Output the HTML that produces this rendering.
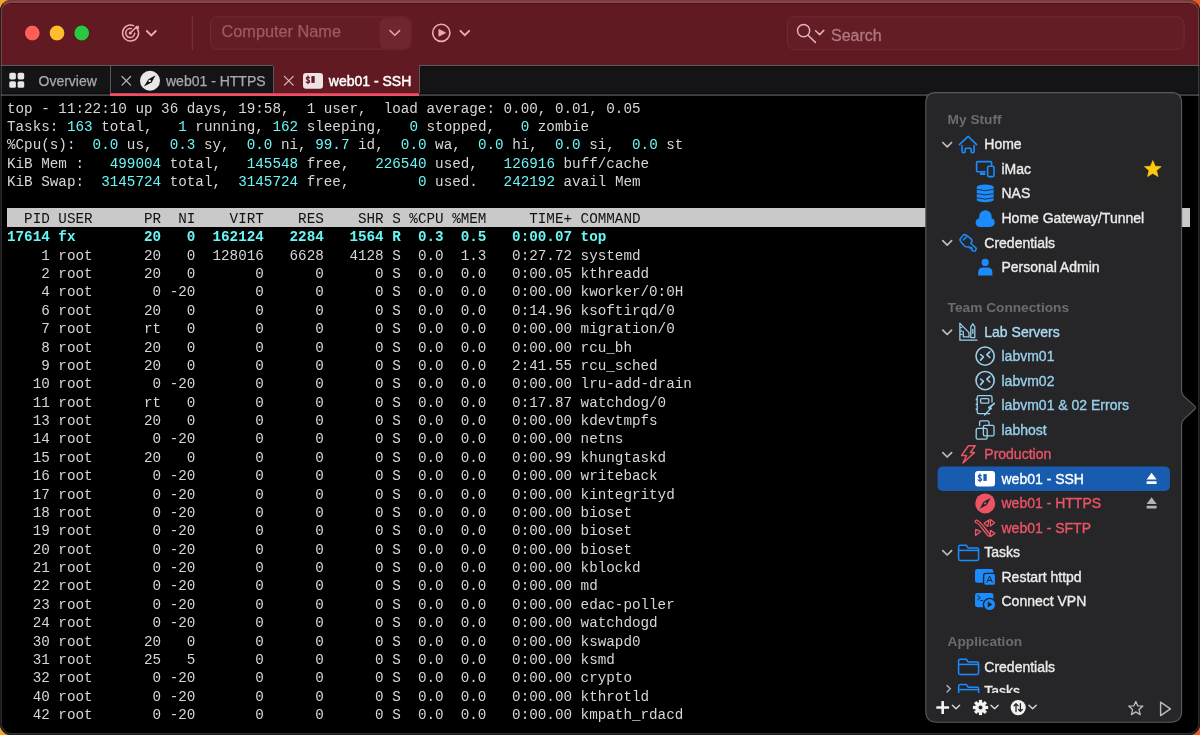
<!DOCTYPE html>
<html><head><meta charset="utf-8"><style>
*{margin:0;padding:0;box-sizing:border-box}
html,body{width:1200px;height:735px;overflow:hidden}
body{position:relative;background:linear-gradient(90deg,#f2a52c 0%,#f08a2a 50%,#ee5a26 100%);font-family:"Liberation Sans",sans-serif}
#win{position:absolute;left:0;top:0;width:1200px;height:735px;clip-path:inset(0 round 11px);background:#000}
#winb{position:absolute;left:0;top:0;width:1200px;height:735px;border-radius:11px;border:1px solid rgba(30,30,30,0.9);border-top-color:#7a3c28;pointer-events:none}
#winb2{position:absolute;left:1px;top:1px;width:1198px;height:733px;border-radius:10px;border:1px solid rgba(255,255,255,0.17);border-top:2px solid rgba(255,255,255,0.2);border-bottom-color:rgba(255,255,255,0.2);pointer-events:none}
.a{position:absolute}
.gs{will-change:transform}
#tb{left:0;top:0;width:1200px;height:65px;background:#621a22}
#term{position:absolute;left:7.0px;top:99.71px;font-family:"Liberation Mono",monospace;font-size:14.28px;line-height:18.38px;color:#d6d6d6;white-space:pre}
#term .ln{height:18.38px}
#term .c{color:#6af6f6}
#term .tb{color:#6af6f6;font-weight:bold}
#term .hd{color:#111}
</style></head>
<body>
<div id="win" class="gs">
  <div class="a" id="tb"></div><div class="a" style="left:10px;top:3px;width:1180px;height:1px;background:#570f19"></div>
  
<svg class="a" style="left:0;top:0" width="1200" height="66" viewBox="0 0 1200 66">
  <circle cx="32.3" cy="33" r="7.9" fill="#4a1218"/>
  <circle cx="32.3" cy="33" r="7.4" fill="#ff5f57"/>
  <circle cx="57" cy="33" r="7.9" fill="#4a1218"/>
  <circle cx="57" cy="33" r="7.4" fill="#febc2e"/>
  <circle cx="81.7" cy="33" r="7.9" fill="#4a1218"/>
  <circle cx="81.7" cy="33" r="7.4" fill="#28c840"/>
  <g fill="none" stroke="#f0a9b3" stroke-width="1.5" stroke-linecap="round">
    <path d="M137.6 29.2 A8 8 0 1 1 133.6 25.6"/>
    <path d="M134.7 33.3 A4.5 4.5 0 1 1 131.2 28.6"/>
    <path d="M130.3 33 L136.4 27"/>
    <path d="M146.8 31 L151.3 35.5 L155.8 31" stroke-width="1.8"/>
    <circle cx="441.3" cy="32.8" r="8.6" stroke-width="1.6"/>
    <path d="M460.4 30.8 L464.8 35.2 L469.2 30.8" stroke-width="1.8"/>
  </g>
  <path d="M130.3 33 m-1.6 0 a1.6 1.6 0 1 0 3.2 0 a1.6 1.6 0 1 0 -3.2 0" fill="#f0a9b3"/>
  <path d="M138.6 26.2 L138.3 28.8 L135.8 28.5 L136 26.4 Z" fill="#f0a9b3" stroke="#f0a9b3" stroke-width="0.9" stroke-linejoin="round"/>
  <path d="M438.9 29.4 L445.6 32.8 L438.9 36.2 Z" fill="#f0a9b3" stroke="#f0a9b3" stroke-width="0.8" stroke-linejoin="round"/>
  <rect x="191.8" y="16" width="1" height="34" fill="#7d3641"/>
  <rect x="210.5" y="16.8" width="200.6" height="32.4" rx="7" fill="#641d25" stroke="#6f2a33" stroke-width="1"/>
  <rect x="380.2" y="18.6" width="29.2" height="29.4" rx="5.5" fill="#70262f" stroke="#752a33" stroke-width="0.8"/>
  <path d="M390 30.6 L394.8 35.3 L399.6 30.6" fill="none" stroke="#d9a6ae" stroke-width="1.5" stroke-linecap="round"/>
  <rect x="787.5" y="16.8" width="396.5" height="32.6" rx="7" fill="#641d25" stroke="#6f2a33" stroke-width="1"/>
  <g fill="none" stroke="#e0b2b9" stroke-width="1.5" stroke-linecap="round">
    <circle cx="803.6" cy="30.6" r="6.1"/>
    <path d="M808 35.2 L815.4 42.4"/>
    <path d="M815.6 30.8 L819.6 34.6 L823.8 30.4"/>
  </g>
</svg>
<div class="a" style="left:221.5px;top:20.5px;font-size:16.3px;line-height:20px;color:#9b5b65;-webkit-text-stroke:0.25px #9b5b65">Computer Name</div>
<div class="a" style="left:831px;top:25.5px;font-size:16px;line-height:20px;color:#b07880;-webkit-text-stroke:0.3px #b07880">Search</div>

  
<div class="a" style="left:0;top:65px;width:1200px;height:30px;background:#141316"></div><div class="a" style="left:0;top:66px;width:1200px;height:1px;background:#0e0e10"></div>
<div class="a" style="left:0;top:65px;width:273px;height:1px;background:#5b5b5d"></div>
<div class="a" style="left:419px;top:65px;width:781px;height:1px;background:#5b5b5d"></div>
<div class="a" style="left:273px;top:64px;width:146px;height:31px;background:#621a22"></div>
<div class="a" style="left:110px;top:66px;width:1px;height:28px;background:#58585a"></div>
<div class="a" style="left:272.5px;top:66px;width:1px;height:28px;background:#58585a"></div>
<div class="a" style="left:418.5px;top:66px;width:1px;height:28px;background:#58585a"></div>
<div class="a" style="left:0;top:93px;width:1200px;height:1px;background:#0c0c0e"></div><div class="a" style="left:0;top:94px;width:1200px;height:1px;background:#3a3a3c"></div><div class="a" style="left:0;top:95px;width:1200px;height:1px;background:#3e3e40"></div>
<div class="a" style="left:110px;top:93px;width:309px;height:1px;background:#c8445a"></div><div class="a" style="left:110px;top:94px;width:309px;height:2px;background:#f44e66"></div>
<svg class="a" style="left:0;top:60px" width="440" height="36" viewBox="0 60 440 36">
  <g fill="#e6e6e6">
    <rect x="9.3" y="72.8" width="6.6" height="6.6" rx="1.6"/>
    <rect x="17.6" y="72.8" width="6.6" height="6.6" rx="1.6"/>
    <rect x="9.3" y="81.2" width="6.6" height="6.6" rx="1.6"/>
    <rect x="17.6" y="81.2" width="6.6" height="6.6" rx="1.6"/>
  </g>
  <g stroke="#b9b9b9" stroke-width="1.2" stroke-linecap="round">
    <path d="M122 76.5 L130.6 85.1 M130.6 76.5 L122 85.1"/>
  </g>
  <g stroke="#e9b4bc" stroke-width="1.2" stroke-linecap="round">
    <path d="M284.4 76.3 L293.2 85.1 M293.2 76.3 L284.4 85.1"/>
  </g>
  <circle cx="150" cy="80.8" r="10" fill="#e8e8e8"/>
  <path d="M155.6 75.2 L151.6 82.4 L143.9 86.6 L148.4 79.2 Z" fill="#111"/>
  <circle cx="149.7" cy="80.9" r="1.2" fill="#e8e8e8"/>
  <rect x="303" y="73" width="20" height="15.8" rx="3" fill="#efe2e4"/>
  <path d="M309.4 77.9 Q308.7 77 307.7 77 Q306.3 77.1 306.4 78.4 Q306.6 79.4 308 79.8 Q309.7 80.3 309.7 81.5 Q309.6 82.8 308 82.8 Q306.9 82.8 306.1 81.9 M308 75.9 V83.6" fill="none" stroke="#621a22" stroke-width="1.2" stroke-linecap="round"/>
  <rect x="311.4" y="76.1" width="3.3" height="6.8" fill="#621a22"/>
</svg>
<div class="a" style="left:38.5px;top:72.5px;font-size:14px;line-height:16px;color:#a9a9ab;-webkit-text-stroke:0.25px #a9a9ab">Overview</div>
<div class="a" style="left:166px;top:72.5px;font-size:14px;line-height:16px;color:#a9a9ab;-webkit-text-stroke:0.25px #a9a9ab">web01 - HTTPS</div>
<div class="a" style="left:328.8px;top:72.5px;font-size:14px;line-height:16px;color:#ffffff;-webkit-text-stroke:0.45px #fff">web01 - SSH</div>

  <div class="a" style="left:7px;top:208.3px;width:1182.5px;height:18.3px;background:#c9c9c9"></div>
  <div id="term"><div class="ln">top - 11:22:10 up 36 days, 19:58,  1 user,  load average: 0.00, 0.01, 0.05</div><div class="ln">Tasks: <span class="c">163</span> total,   <span class="c">1</span> running, <span class="c">162</span> sleeping,   <span class="c">0</span> stopped,   <span class="c">0</span> zombie</div><div class="ln">%Cpu(s):  <span class="c">0.0</span> us,  <span class="c">0.3</span> sy,  <span class="c">0.0</span> ni, <span class="c">99.7</span> id,  <span class="c">0.0</span> wa,  <span class="c">0.0</span> hi,  <span class="c">0.0</span> si,  <span class="c">0.0</span> st</div><div class="ln">KiB Mem :   <span class="c">499004</span> total,   <span class="c">145548</span> free,   <span class="c">226540</span> used,   <span class="c">126916</span> buff/cache</div><div class="ln">KiB Swap:  <span class="c">3145724</span> total,  <span class="c">3145724</span> free,        <span class="c">0</span> used.   <span class="c">242192</span> avail Mem</div><div class="ln"></div><div class="ln"><span class="hd">  PID USER      PR  NI    VIRT    RES    SHR S %CPU %MEM     TIME+ COMMAND</span></div><div class="ln"><span class="tb">17614 fx        20   0  162124   2284   1564 R  0.3  0.5   0:00.07 top</span></div><div class="ln">    1 root      20   0  128016   6628   4128 S  0.0  1.3   0:27.72 systemd</div><div class="ln">    2 root      20   0       0      0      0 S  0.0  0.0   0:00.05 kthreadd</div><div class="ln">    4 root       0 -20       0      0      0 S  0.0  0.0   0:00.00 kworker/0:0H</div><div class="ln">    6 root      20   0       0      0      0 S  0.0  0.0   0:14.96 ksoftirqd/0</div><div class="ln">    7 root      rt   0       0      0      0 S  0.0  0.0   0:00.00 migration/0</div><div class="ln">    8 root      20   0       0      0      0 S  0.0  0.0   0:00.00 rcu_bh</div><div class="ln">    9 root      20   0       0      0      0 S  0.0  0.0   2:41.55 rcu_sched</div><div class="ln">   10 root       0 -20       0      0      0 S  0.0  0.0   0:00.00 lru-add-drain</div><div class="ln">   11 root      rt   0       0      0      0 S  0.0  0.0   0:17.87 watchdog/0</div><div class="ln">   13 root      20   0       0      0      0 S  0.0  0.0   0:00.00 kdevtmpfs</div><div class="ln">   14 root       0 -20       0      0      0 S  0.0  0.0   0:00.00 netns</div><div class="ln">   15 root      20   0       0      0      0 S  0.0  0.0   0:00.99 khungtaskd</div><div class="ln">   16 root       0 -20       0      0      0 S  0.0  0.0   0:00.00 writeback</div><div class="ln">   17 root       0 -20       0      0      0 S  0.0  0.0   0:00.00 kintegrityd</div><div class="ln">   18 root       0 -20       0      0      0 S  0.0  0.0   0:00.00 bioset</div><div class="ln">   19 root       0 -20       0      0      0 S  0.0  0.0   0:00.00 bioset</div><div class="ln">   20 root       0 -20       0      0      0 S  0.0  0.0   0:00.00 bioset</div><div class="ln">   21 root       0 -20       0      0      0 S  0.0  0.0   0:00.00 kblockd</div><div class="ln">   22 root       0 -20       0      0      0 S  0.0  0.0   0:00.00 md</div><div class="ln">   23 root       0 -20       0      0      0 S  0.0  0.0   0:00.00 edac-poller</div><div class="ln">   24 root       0 -20       0      0      0 S  0.0  0.0   0:00.00 watchdogd</div><div class="ln">   30 root      20   0       0      0      0 S  0.0  0.0   0:00.00 kswapd0</div><div class="ln">   31 root      25   5       0      0      0 S  0.0  0.0   0:00.00 ksmd</div><div class="ln">   32 root       0 -20       0      0      0 S  0.0  0.0   0:00.00 crypto</div><div class="ln">   40 root       0 -20       0      0      0 S  0.0  0.0   0:00.00 kthrotld</div><div class="ln">   42 root       0 -20       0      0      0 S  0.0  0.0   0:00.00 kmpath_rdacd</div></div>
  
<svg class="a" style="left:900px;top:80px" width="300" height="655" viewBox="900 80 300 655">
  <path d="M935.8 92.6 H1171.6 Q1181.6 92.6 1181.6 102.6 V390.4 Q1181.6 394.2 1184.6 396.8 L1194.5 405.9 Q1196.5 407.7 1194.5 409.5 L1184.6 418.6 Q1181.6 421.2 1181.6 425 V711 Q1181.6 722.2 1170.4 722.2 H937 Q925.8 722.2 925.8 711 V102.6 Q925.8 92.6 935.8 92.6 Z" fill="#262628" stroke="#5a5a5c" stroke-width="1.1"/>
  <rect x="937.6" y="466.6" width="232.4" height="24.4" rx="5" fill="#175cae"/>
  <path d="M942.8000000000001 142.49999999999997 L947.2 146.89999999999998 L951.6 142.49999999999997" fill="none" stroke="#bdbdbf" stroke-width="1.7" stroke-linecap="round" stroke-linejoin="round"/><path d="M942.8000000000001 240.7 L947.2 245.1 L951.6 240.7" fill="none" stroke="#bdbdbf" stroke-width="1.7" stroke-linecap="round" stroke-linejoin="round"/><path d="M942.8000000000001 330.1 L947.2 334.50000000000006 L951.6 330.1" fill="none" stroke="#bdbdbf" stroke-width="1.7" stroke-linecap="round" stroke-linejoin="round"/><path d="M942.8000000000001 452.6 L947.2 457.00000000000006 L951.6 452.6" fill="none" stroke="#bdbdbf" stroke-width="1.7" stroke-linecap="round" stroke-linejoin="round"/><path d="M942.8000000000001 550.6 L947.2 555.0 L951.6 550.6" fill="none" stroke="#bdbdbf" stroke-width="1.7" stroke-linecap="round" stroke-linejoin="round"/><g fill="none" stroke="#1a8cff" stroke-width="1.6" stroke-linecap="round" stroke-linejoin="round"><path d="M959.4 144.6 L968.1 136.3 L976.6 144.6"/><path d="M962 145.6 V151.2 Q962 152.6 963.4 152.6 H964 Q965.1 152.6 965.1 151.5 V149.3 Q965.1 148.2 966.2 148.2 H970 Q971.1 148.2 971.1 149.3 V151.5 Q971.1 152.6 972.2 152.6 H972.7 Q974.1 152.6 974.1 151.2 V145.6"/><path d="M985 171.8 H977.6 Q976.6 171.8 976.6 170.8 V162.6 Q976.6 161.6 977.6 161.6 H990.6 Q991.6 161.6 991.6 162.6 V165.2"/><rect x="987.6" y="166.2" width="6.4" height="10.4" rx="1.3"/></g><rect x="980" y="172.6" width="5.2" height="2.4" fill="#1a8cff"/><g fill="#1a8cff"><ellipse cx="985.2" cy="187" rx="8.4" ry="2.4"/><rect x="976.8" y="187" width="16.8" height="13.2"/><ellipse cx="985.2" cy="200" rx="8.4" ry="2.2"/></g><g fill="none" stroke="#262628" stroke-width="0.9"><path d="M976.8 189.4 Q985.2 192 993.6 189.4"/><path d="M976.8 193.6 Q985.2 196.2 993.6 193.6"/><path d="M976.8 197.8 Q985.2 200.4 993.6 197.8"/></g><g fill="#1a8cff"><circle cx="985.4" cy="216.6" r="6.3"/><circle cx="980" cy="222.6" r="4.4"/><circle cx="990.2" cy="222.4" r="4.5"/><rect x="980" y="219" width="10.2" height="8"/></g><g fill="none" stroke="#1a8cff" stroke-width="1.5" stroke-linejoin="round" stroke-linecap="round"><path d="M962.4 236.2 Q963.9 233.8 966.2 235.1 L970.8 238.6 Q972.8 240.4 971.3 242.6 L970.8 243.3 L976.3 248.3 L975.4 251 L972.7 250.8 L971.5 249.5 L972.2 248.4 L970.9 247.4 L970 248.2 L968.5 246.6 L967.4 246.9 Q965.7 247.2 964.3 245.8 L960.6 241.5 Q959.2 239.7 960.6 238.4 Z"/><path d="M963.2 240 L966.6 236.9"/></g><g fill="#1a8cff"><circle cx="985.2" cy="262.4" r="3.6"/><path d="M978.2 275.6 V272.5 Q978.2 267.6 983 267.6 H987.6 Q992.4 267.6 992.4 272.5 V275.6 Z"/></g><path d="M1152.8 160.6 L1155.2 166.2 L1161.2 166.6 L1156.6 170.5 L1158.1 176.6 L1152.8 173.4 L1147.5 176.6 L1149 170.5 L1144.4 166.6 L1150.4 166.2 Z" fill="#fdc90e" stroke="#fdc90e" stroke-width="0.6" stroke-linejoin="round"/><g fill="none" stroke="#98cfec" stroke-width="1.3" stroke-linejoin="round" stroke-linecap="round"><path d="M959.9 323.4 V340.2 H977"/><path d="M959.9 323.4 L969 332.6 V337.2"/><path d="M963.3 331.4 V336.8 H968.4"/><path d="M970.8 337.6 V326.8 L972.8 323.8 L974.8 326.8 V337.6 Z"/><path d="M972.8 329.4 V333.4"/><path d="M960.6 327.6 h1.2 M960.6 331 h1.2 M960.6 334.4 h1.2"/></g><g fill="none" stroke="#98cfec" stroke-width="1.6" stroke-linecap="round" stroke-linejoin="round"><circle cx="985.1" cy="356.1" r="9.1"/><path d="M980.6 354.5 L983.4 356.90000000000003 L980.6 360.1"/><path d="M989.8 351.90000000000003 L986.8 354.70000000000005 L989.8 357.5"/></g><g fill="none" stroke="#98cfec" stroke-width="1.6" stroke-linecap="round" stroke-linejoin="round"><circle cx="985.1" cy="380.6" r="9.1"/><path d="M980.6 379.0 L983.4 381.40000000000003 L980.6 384.6"/><path d="M989.8 376.40000000000003 L986.8 379.20000000000005 L989.8 382.0"/></g><g fill="none" stroke="#98cfec" stroke-width="1.3" stroke-linejoin="round" stroke-linecap="round"><path d="M989.8 413.6 H978.8 Q977.2 413.6 977.2 412 V397.2 Q977.2 395.6 978.8 395.6 H990.4 Q992 395.6 992 397.2 V402"/><rect x="980.6" y="398.6" width="8.2" height="4.6" rx="1"/><path d="M994.4 403.4 L988.6 407.6 L991 408 L984.6 415"/><path d="M994.4 403.4 L989.2 408.4 L991.4 408.8"/></g><g fill="#98cfec"><circle cx="976.5" cy="399.4" r="0.9"/><circle cx="976.5" cy="404.4" r="0.9"/><circle cx="976.5" cy="409.2" r="0.9"/></g><g fill="none" stroke="#98cfec" stroke-width="1.3" stroke-linejoin="round" stroke-linecap="round"><path d="M979.6 425.5 V422.2 Q979.6 420.8 981 420.8 H987.6 Q989 420.8 989 422.2 V425"/><rect x="983.4" y="425.4" width="10.6" height="10.4" rx="1.4"/><rect x="976.2" y="428.4" width="11" height="10.8" rx="1.4"/></g><path d="M968.4 445.8 H975.2 L970.4 452.6 H974.4 L963 463 L966.6 455.4 H961.6 Z" fill="none" stroke="#ec5466" stroke-width="1.5" stroke-linejoin="round"/><rect x="975" y="471" width="20" height="15.6" rx="3" fill="#ffffff"/><path d="M981.3 475.9 Q980.6 475 979.6 475 Q978.2 475.1 978.3 476.4 Q978.5 477.4 979.9 477.8 Q981.6 478.3 981.6 479.5 Q981.5 480.8 979.9 480.8 Q978.8 480.8 978 479.9 M979.9 473.9 V481.6" fill="none" stroke="#175cae" stroke-width="1.2" stroke-linecap="round"/><rect x="983.4" y="474.1" width="3.3" height="6.8" fill="#175cae"/><circle cx="985.2" cy="503.4" r="10" fill="#ec5466"/><path d="M990.6 498 L986.8 505 L979.8 508.8 L983.6 501.8 Z" fill="#262628"/><circle cx="985.2" cy="503.4" r="1.1" fill="#ec5466"/><path d="M976.4 521.4 C979.6 521.8 985.6 531.4 988.8 534.8" fill="none" stroke="#ec5466" stroke-width="3.8" stroke-linecap="round"/><path d="M976.4 521.4 C979.6 521.8 985.6 531.4 988.8 534.8" fill="none" stroke="#262628" stroke-width="1.1" stroke-linecap="round"/><g fill="none" stroke="#ec5466" stroke-width="1.3" stroke-linejoin="round"><path d="M989 520 L984.2 523.4 L987.8 526.4 Z"/><path d="M990.4 519.4 V526 L994.6 522.7 Z"/><path d="M975.6 529.4 V535.6 L980.6 531.4 Z"/><path d="M990.4 530.2 V536.6 L994.8 533.4 Z"/></g><g fill="none" stroke="#1a8cff" stroke-width="1.5" stroke-linejoin="round"><path d="M960.2 560.4000000000001 H977.0 Q978.6 560.4000000000001 978.6 558.8000000000001 V549.6 Q978.6 548.0 977.0 548.0 H968.2 L966.2 545.2 H960.2 Q958.6 545.2 958.6 546.8000000000001 V558.8000000000001 Q958.6 560.4000000000001 960.2 560.4000000000001 Z"/><path d="M958.6 550.4000000000001 H978.6"/></g><rect x="975" y="569" width="18.4" height="13.8" rx="2.4" fill="#1a8cff"/><rect x="983.6" y="573.4" width="12" height="12" rx="2.2" fill="#1a8cff" stroke="#262628" stroke-width="1.4"/><path d="M986.8 582.6 L989.6 576 L992.4 582.6 M987.8 580.4 H991.4" fill="none" stroke="#262628" stroke-width="1"/><rect x="975" y="593" width="18.4" height="14.2" rx="2.4" fill="#1a8cff"/><path d="M977.4 595.6 L980.2 597.8 L977.4 600 M980.2 600.6 H983.2" fill="none" stroke="#262628" stroke-width="1"/><circle cx="989.6" cy="604.6" r="6.2" fill="#1a8cff" stroke="#262628" stroke-width="1.4"/><path d="M987.8 601.6 L992.4 604.6 L987.8 607.6 Z" fill="#262628"/><g fill="none" stroke="#1a8cff" stroke-width="1.5" stroke-linejoin="round"><path d="M960.2 674.4000000000001 H977.0 Q978.6 674.4000000000001 978.6 672.8000000000001 V663.6 Q978.6 662.0 977.0 662.0 H968.2 L966.2 659.2 H960.2 Q958.6 659.2 958.6 660.8000000000001 V672.8000000000001 Q958.6 674.4000000000001 960.2 674.4000000000001 Z"/><path d="M958.6 664.4000000000001 H978.6"/></g><g fill="#ffffff"><path d="M1151.6 472.8 L1156.6 479.4 H1146.6 Z"/><rect x="1146.6" y="481.2" width="10" height="2.8" rx="0.4"/></g><g fill="#b4b4b6"><path d="M1151.6 497.3 L1156.6 503.9 H1146.6 Z"/><rect x="1146.6" y="505.7" width="10" height="2.8" rx="0.4"/></g>
  <g fill="#f2f2f2"><rect x="941.4" y="701" width="2.6" height="13" rx="0.6"/><rect x="936.3" y="706.2" width="12.8" height="2.6" rx="0.6"/></g><path d="M952.4 705.2 L956 708.8 L959.6 705.2" fill="none" stroke="#d8d8d8" stroke-width="1.4" stroke-linecap="round" stroke-linejoin="round"/><g fill="#f2f2f2"><rect x="978.9" y="699.9" width="3.2" height="4" transform="rotate(0 980.5 707.5)"/><rect x="978.9" y="699.9" width="3.2" height="4" transform="rotate(45 980.5 707.5)"/><rect x="978.9" y="699.9" width="3.2" height="4" transform="rotate(90 980.5 707.5)"/><rect x="978.9" y="699.9" width="3.2" height="4" transform="rotate(135 980.5 707.5)"/><rect x="978.9" y="699.9" width="3.2" height="4" transform="rotate(180 980.5 707.5)"/><rect x="978.9" y="699.9" width="3.2" height="4" transform="rotate(225 980.5 707.5)"/><rect x="978.9" y="699.9" width="3.2" height="4" transform="rotate(270 980.5 707.5)"/><rect x="978.9" y="699.9" width="3.2" height="4" transform="rotate(315 980.5 707.5)"/><circle cx="980.5" cy="707.5" r="5.4"/></g><circle cx="980.5" cy="707.5" r="2" fill="#262628"/><path d="M991.0 705.2 L994.6 708.8 L998.2 705.2" fill="none" stroke="#d8d8d8" stroke-width="1.4" stroke-linecap="round" stroke-linejoin="round"/><circle cx="1018.2" cy="707.6" r="7.6" fill="#f2f2f2"/><g fill="none" stroke="#262628" stroke-width="1.3" stroke-linecap="round" stroke-linejoin="round"><path d="M1016 711.6 V703.8 M1014.1 705.7 L1016 703.8 L1017.9 705.7"/><path d="M1020.4 703.6 V711.4 M1018.5 709.5 L1020.4 711.4 L1022.3 709.5"/></g><path d="M1029.0 705.2 L1032.6 708.8 L1036.1999999999998 705.2" fill="none" stroke="#d8d8d8" stroke-width="1.4" stroke-linecap="round" stroke-linejoin="round"/><path d="M1135.8 701.4 L1137.7 705.8 L1142.8 706.2 L1139 709.4 L1140.2 714.6 L1135.8 711.9 L1131.4 714.6 L1132.6 709.4 L1128.8 706.2 L1133.9 705.8 Z" fill="none" stroke="#bdbdbd" stroke-width="1.3" stroke-linejoin="round"/><path d="M1160.6 702.2 L1170.4 708.8 L1160.6 715.6 Z" fill="none" stroke="#bdbdbd" stroke-width="1.4" stroke-linejoin="round"/>
</svg>
<svg class="a" style="left:926px;top:680px" width="256" height="12.6" viewBox="926 680 256 12.6"><path d="M947 685.6 L950.2 688.8 L947 692" fill="none" stroke="#a9a9ab" stroke-width="1.5" stroke-linecap="round"/><g fill="none" stroke="#1a8cff" stroke-width="1.5" stroke-linejoin="round"><path d="M960.2 699.6 H977.0 Q978.6 699.6 978.6 698.0 V688.8 Q978.6 687.1999999999999 977.0 687.1999999999999 H968.2 L966.2 684.4 H960.2 Q958.6 684.4 958.6 686.0 V698.0 Q958.6 699.6 960.2 699.6 Z"/><path d="M958.6 689.6 H978.6"/></g></svg>
<div class="a" style="left:947.6px;top:112.40px;font-size:13.7px;line-height:16px;color:#6c6c6e;font-weight:bold;white-space:nowrap;">My Stuff</div><div class="a" style="left:984.3px;top:136.35px;font-size:14px;line-height:16px;color:#ececec;-webkit-text-stroke:0.35px #ececec;white-space:nowrap;">Home</div><div class="a" style="left:1001.5px;top:160.95px;font-size:14px;line-height:16px;color:#ececec;-webkit-text-stroke:0.35px #ececec;white-space:nowrap;">iMac</div><div class="a" style="left:1001.5px;top:185.45px;font-size:14px;line-height:16px;color:#ececec;-webkit-text-stroke:0.35px #ececec;white-space:nowrap;">NAS</div><div class="a" style="left:1001.5px;top:209.95px;font-size:14px;line-height:16px;color:#ececec;-webkit-text-stroke:0.35px #ececec;white-space:nowrap;">Home Gateway/Tunnel</div><div class="a" style="left:984.3px;top:234.55px;font-size:14px;line-height:16px;color:#ececec;-webkit-text-stroke:0.35px #ececec;white-space:nowrap;">Credentials</div><div class="a" style="left:1001.5px;top:259.05px;font-size:14px;line-height:16px;color:#ececec;-webkit-text-stroke:0.35px #ececec;white-space:nowrap;">Personal Admin</div><div class="a" style="left:947.6px;top:299.70px;font-size:13.7px;line-height:16px;color:#6c6c6e;font-weight:bold;white-space:nowrap;">Team Connections</div><div class="a" style="left:984.3px;top:323.95px;font-size:14px;line-height:16px;color:#a9d9f2;-webkit-text-stroke:0.35px #a9d9f2;white-space:nowrap;">Lab Servers</div><div class="a" style="left:1001.5px;top:348.45px;font-size:14px;line-height:16px;color:#98cfec;-webkit-text-stroke:0.35px #98cfec;white-space:nowrap;">labvm01</div><div class="a" style="left:1001.5px;top:372.95px;font-size:14px;line-height:16px;color:#98cfec;-webkit-text-stroke:0.35px #98cfec;white-space:nowrap;">labvm02</div><div class="a" style="left:1001.5px;top:397.45px;font-size:14px;line-height:16px;color:#98cfec;-webkit-text-stroke:0.35px #98cfec;white-space:nowrap;">labvm01 &amp; 02 Errors</div><div class="a" style="left:1001.5px;top:421.95px;font-size:14px;line-height:16px;color:#98cfec;-webkit-text-stroke:0.35px #98cfec;white-space:nowrap;">labhost</div><div class="a" style="left:984.3px;top:446.45px;font-size:14px;line-height:16px;color:#ec5466;-webkit-text-stroke:0.35px #ec5466;white-space:nowrap;">Production</div><div class="a" style="left:1001.5px;top:470.95px;font-size:14px;line-height:16px;color:#ffffff;-webkit-text-stroke:0.35px #ffffff;white-space:nowrap;">web01 - SSH</div><div class="a" style="left:1001.5px;top:495.45px;font-size:14px;line-height:16px;color:#ec5466;-webkit-text-stroke:0.35px #ec5466;white-space:nowrap;">web01 - HTTPS</div><div class="a" style="left:1001.5px;top:519.95px;font-size:14px;line-height:16px;color:#ec5466;-webkit-text-stroke:0.35px #ec5466;white-space:nowrap;">web01 - SFTP</div><div class="a" style="left:984.3px;top:544.45px;font-size:14px;line-height:16px;color:#ececec;-webkit-text-stroke:0.35px #ececec;white-space:nowrap;">Tasks</div><div class="a" style="left:1001.5px;top:568.95px;font-size:14px;line-height:16px;color:#ececec;-webkit-text-stroke:0.35px #ececec;white-space:nowrap;">Restart httpd</div><div class="a" style="left:1001.5px;top:593.45px;font-size:14px;line-height:16px;color:#ececec;-webkit-text-stroke:0.35px #ececec;white-space:nowrap;">Connect VPN</div><div class="a" style="left:947.6px;top:634.00px;font-size:13.7px;line-height:16px;color:#6c6c6e;font-weight:bold;white-space:nowrap;">Application</div><div class="a" style="left:984.3px;top:658.55px;font-size:14px;line-height:16px;color:#ececec;-webkit-text-stroke:0.35px #ececec;white-space:nowrap;">Credentials</div><div class="a" style="left:926px;top:680px;width:256px;height:12.6px;overflow:hidden"><div class="a" style="left:58.299999999999955px;top:3.05px;font-size:14px;line-height:16px;color:#ececec;-webkit-text-stroke:0.35px #ececec;white-space:nowrap;">Tasks</div></div>

</div>
<div id="winb"></div><div id="winb2"></div>
</body></html>
